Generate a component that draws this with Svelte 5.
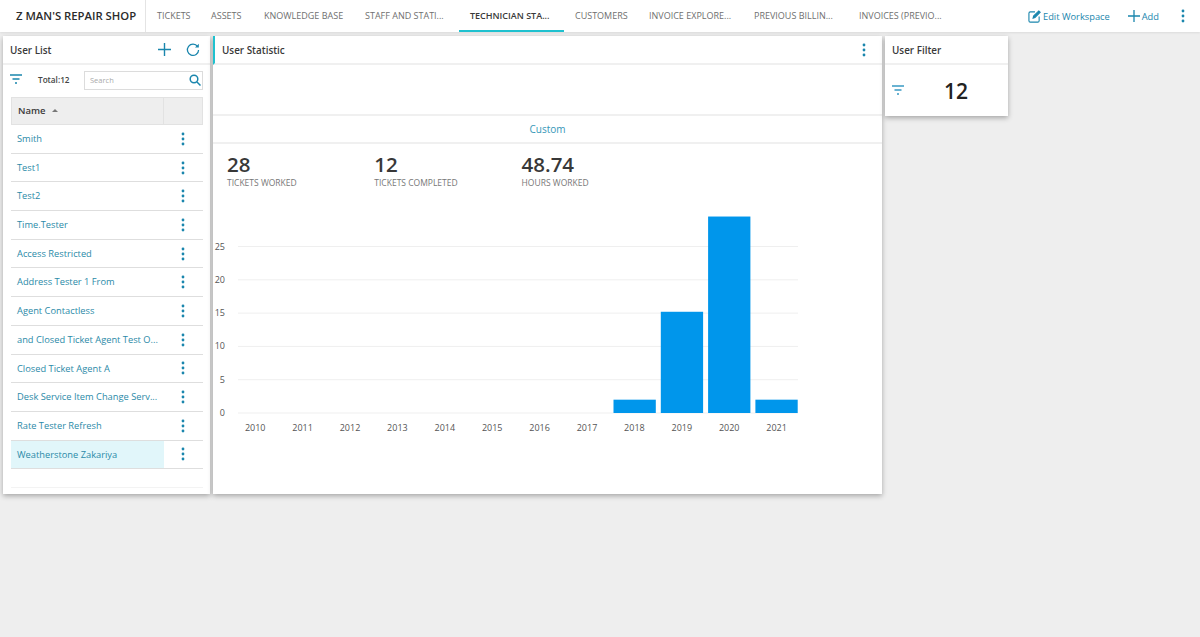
<script>
  const tabs = [
    { label: 'TICKETS' },
    { label: 'ASSETS' },
    { label: 'KNOWLEDGE BASE' },
    { label: 'STAFF AND STATI...' },
    { label: 'TECHNICIAN STA...', active: true },
    { label: 'CUSTOMERS' },
    { label: 'INVOICE EXPLORE...' },
    { label: 'PREVIOUS BILLIN...' },
    { label: 'INVOICES (PREVIO...' }
  ]
  const users = [
    'Smith', 'Test1', 'Test2', 'Time.Tester', 'Access Restricted', 'Address Tester 1 From',
    'Agent Contactless', 'and Closed Ticket Agent Test O...', 'Closed Ticket Agent A',
    'Desk Service Item Change Serv...', 'Rate Tester Refresh', 'Weatherstone Zakariya'
  ]
  const stats = [
    { value: '28', label: 'TICKETS WORKED' },
    { value: '12', label: 'TICKETS COMPLETED' },
    { value: '48.74', label: 'HOURS WORKED' }
  ]
  const ticks = [25, 20, 15, 10, 5, 0]
  const years = [
    [2010, 0], [2011, 0], [2012, 0], [2013, 0], [2014, 0], [2015, 0],
    [2016, 0], [2017, 0], [2018, 2], [2019, 15.2], [2020, 29.5], [2021, 2]
  ]
  const unit = 6.66
</script>

{#snippet dots()}
  <svg class="dots" width="4" height="14" viewBox="0 0 4 14"><circle cx="2" cy="2" r="1.4"/><circle cx="2" cy="7" r="1.4"/><circle cx="2" cy="12" r="1.4"/></svg>
{/snippet}

{#snippet filter()}
  <svg class="filter" width="12" height="11" viewBox="0 0 12 11"><path d="M0 1h12M2.5 5h7M5 9h2" fill="none" stroke="currentColor" stroke-width="1.6"/></svg>
{/snippet}

<header class="topbar">
  <div class="brand">Z MAN'S REPAIR SHOP</div>
  <nav>
    {#each tabs as t}
      <span class="tab" class:active={t.active}>{t.label}</span>
    {/each}
  </nav>
  <div class="actions">
    <span class="action">
      <svg width="13" height="13" viewBox="0 0 14 14" fill="none" stroke="currentColor" stroke-width="1.2"><path d="M7.5 2H2.5a1.5 1.5 0 0 0-1.5 1.5v8A1.5 1.5 0 0 0 2.5 13h8a1.5 1.5 0 0 0 1.5-1.5V7"/><path d="M5.5 8.8 6 6.6 11.6 1l1.5 1.5L7.5 8.2z" fill="currentColor"/></svg>
      Edit Workspace
    </span>
    <span class="action add">
      <svg width="12" height="12" viewBox="0 0 12 12"><path d="M6 0v12M0 6h12" stroke="currentColor" stroke-width="1.3"/></svg>
      Add
    </span>
    {@render dots()}
  </div>
</header>

<main>
  <section class="panel users">
    <div class="head">
      <h2>User List</h2>
      <svg class="plus" width="13" height="13" viewBox="0 0 13 13"><path d="M6.5 0v13M0 6.5h13" stroke="currentColor" stroke-width="1.4"/></svg>
      <svg class="refresh" width="14" height="14" viewBox="0 0 14 14" fill="none"><path d="M11.6 3.6A5.6 5.6 0 1 0 12.6 7" stroke="currentColor" stroke-width="1.3"/><path d="M12.8.8v3.8H9z" fill="currentColor"/></svg>
    </div>
    <div class="tools">
      {@render filter()}
      <span class="total">Total:12</span>
      <div class="search">
        <span>Search</span>
        <svg width="12" height="12" viewBox="0 0 12 12" fill="none" stroke="currentColor" stroke-width="1.5"><circle cx="5" cy="5" r="3.8"/><path d="M8 8l3.5 3.5"/></svg>
      </div>
    </div>
    <div class="table">
      <div class="thead">
        <div class="name">Name <i class="caret"></i></div>
        <div class="cell"></div>
      </div>
      {#each users as u, i}
        <div class="row">
          <div class="uname" class:selected={i === users.length - 1}>{u}</div>
          <div class="cell">{@render dots()}</div>
        </div>
      {/each}
      <div class="tail"></div>
    </div>
  </section>

  <section class="panel stat">
    <div class="head">
      <h2>User Statistic</h2>
      {@render dots()}
    </div>
    <div class="blank"></div>
    <div class="custom">Custom</div>
    <div class="numbers">
      {#each stats as s}
        <div class="num">
          <strong>{s.value}</strong>
          <small>{s.label}</small>
        </div>
      {/each}
    </div>
    <svg class="chart" width="669" height="240" viewBox="213 214 669 240">
      {#each ticks as t}
        <line x1="238" x2="798" y1={413 - t * unit} y2={413 - t * unit} />
        <text class="ytick" x="225" y={416 - t * unit} text-anchor="end">{t}</text>
      {/each}
      {#each years as [yr, v], i}
        {#if v > 0}
          <rect x={613.5 + (i - 8) * 47.3} y={413 - v * unit} width="42.3" height={v * unit} />
        {/if}
        <text class="xtick" x={255.2 + i * 47.4} y="431" text-anchor="middle">{yr}</text>
      {/each}
    </svg>
  </section>

  <section class="panel side">
    <div class="head"><h2>User Filter</h2></div>
    <div class="count">
      {@render filter()}
      <b>12</b>
    </div>
  </section>
</main>

<style>
  :global(body) {
    margin: 0;
    background: #eeeeee;
    font-family: "Open Sans", "Noto Sans", sans-serif;
    color: #333;
  }
  .topbar {
    height: 32px;
    background: #fff;
    display: flex;
    align-items: stretch;
    box-shadow: 0 1px 2px rgba(0, 0, 0, 0.08);
  }
  .brand {
    width: 146px;
    flex: none;
    box-sizing: border-box;
    padding-left: 16px;
    border-right: 1px solid #e4e4e4;
    font-size: 11.3px;
    font-weight: 600;
    line-height: 31px;
    color: #2b2b2b;
    white-space: nowrap;
  }
  nav {
    display: flex;
    flex: 1;
  }
  .tab {
    font-size: 9px;
    line-height: 31px;
    color: #6f6f6f;
    padding-left: 11px;
    white-space: nowrap;
    box-sizing: border-box;
    flex: none;
    width: 105px;
  }
  .tab:nth-child(1) { width: 54px; }
  .tab:nth-child(2) { width: 53px; }
  .tab:nth-child(3) { width: 101px; }
  .tab:nth-child(6) { width: 74px; }
  .tab.active {
    color: #3a3a3a;
    font-weight: 600;
    border-bottom: 2px solid #1fc1cf;
  }
  .actions {
    display: flex;
    align-items: center;
    padding-right: 15px;
    color: #1a86ad;
    font-size: 9.3px;
  }
  .action {
    display: flex;
    align-items: center;
    gap: 2px;
    margin-right: 18px;
  }
  .action.add { margin-right: 22px; }
  .dots { fill: #1a86ad; flex: none; }
  main {
    display: flex;
    align-items: flex-start;
    gap: 3px;
    padding: 4px 3px 0;
    min-height: calc(100vh - 32px);
    box-sizing: border-box;
  }
  .panel {
    background: #fff;
    box-shadow: 0 2px 5px rgba(0, 0, 0, 0.3);
  }
  .head {
    height: 27px;
    border-bottom: 2px solid #f0f0f0;
    display: flex;
    align-items: center;
    padding: 0 7px;
  }
  h2 {
    margin: 0;
    flex: 1;
    font-size: 9.9px;
    font-weight: 600;
    color: #3a3a3a;
  }
  .users {
    width: 207px;
    height: 458px;
  }
  .plus { color: #1a86ad; margin-right: 15px; }
  .refresh { color: #1a86ad; margin-right: 3px; }
  .tools {
    height: 32px;
    box-sizing: border-box;
    padding: 0 7px 3px 7px;
    display: flex;
    align-items: center;
    color: #1a86ad;
  }
  .total {
    margin-left: 16px;
    font-size: 8.2px;
    font-weight: 600;
    color: #444;
    width: 46px;
    flex: none;
  }
  .search {
    flex: 1;
    height: 17px;
    margin-top: 1px;
    border: 1px solid #dcdcdc;
    display: flex;
    align-items: center;
    justify-content: space-between;
    padding: 0 1px 0 5px;
    font-size: 7.5px;
    color: #aaa;
  }
  .search svg { color: #1a86ad; }
  .table { margin: 0 7px 0 8px; }
  .thead {
    display: flex;
    height: 28px;
    background: #eeeeee;
    border: 1px solid #e2e2e2;
    box-sizing: border-box;
  }
  .name {
    flex: 1;
    font-size: 9.5px;
    font-weight: 600;
    line-height: 25px;
    padding-left: 6px;
    color: #3a3a3a;
  }
  .caret {
    display: inline-block;
    width: 0;
    height: 0;
    margin: 0 0 2px 4px;
    border: 3px solid transparent;
    border-top: 0;
    border-bottom: 3px solid #777;
  }
  .cell {
    width: 39px;
    flex: none;
    display: flex;
    align-items: center;
    justify-content: center;
    box-sizing: border-box;
  }
  .row .cell { padding-right: 2px; }
  .thead .cell { border-left: 1px solid #e2e2e2; }
  .row {
    display: flex;
    height: 28.7px;
    border-bottom: 1px solid #dedede;
    box-sizing: border-box;
    font-size: 9.3px;
    color: #2b8aa8;
  }
  .uname {
    flex: 1;
    min-width: 0;
    padding-left: 6px;
    line-height: 28px;
    white-space: nowrap;
  }
  .uname.selected { background: #e1f6fa; }
  .tail { margin-top: 18px; border-bottom: 1px solid #f3f3f3; }
  .stat {
    width: 669px;
    height: 458px;
  }
  .stat .head {
    border-left: 2px solid #1fc1cf;
    padding: 0 16px 0 7px;
  }
  .blank { height: 49px; border-bottom: 2px solid #f0f0f0; }
  .custom {
    height: 26px;
    line-height: 27px;
    text-align: center;
    font-size: 10px;
    color: #3597b8;
    border-bottom: 2px solid #f0f0f0;
  }
  .numbers {
    display: flex;
    padding: 7px 0 0 14px;
    height: 70px;
    box-sizing: border-box;
  }
  .num {
    width: 147.3px;
    display: flex;
    flex-direction: column;
  }
  .num strong {
    font-size: 20.5px;
    font-weight: 600;
    line-height: 26px;
    color: #383838;
  }
  .num small {
    font-size: 8.5px;
    color: #777;
    line-height: 11px;
  }
  .chart { display: block; }
  line { stroke: #efefef; stroke-width: 1; }
  rect { fill: #0096eb; }
  text {
    font-family: "Open Sans", sans-serif;
    font-size: 9px;
    fill: #555;
  }
  .side { width: 123px; height: 80px; }
  .count {
    display: flex;
    align-items: center;
    height: 51px;
    padding-left: 7px;
    color: #3a9bc4;
  }
  .count b {
    margin-left: 40px;
    font-size: 21px;
    font-weight: 600;
    color: #222;
  }
</style>
